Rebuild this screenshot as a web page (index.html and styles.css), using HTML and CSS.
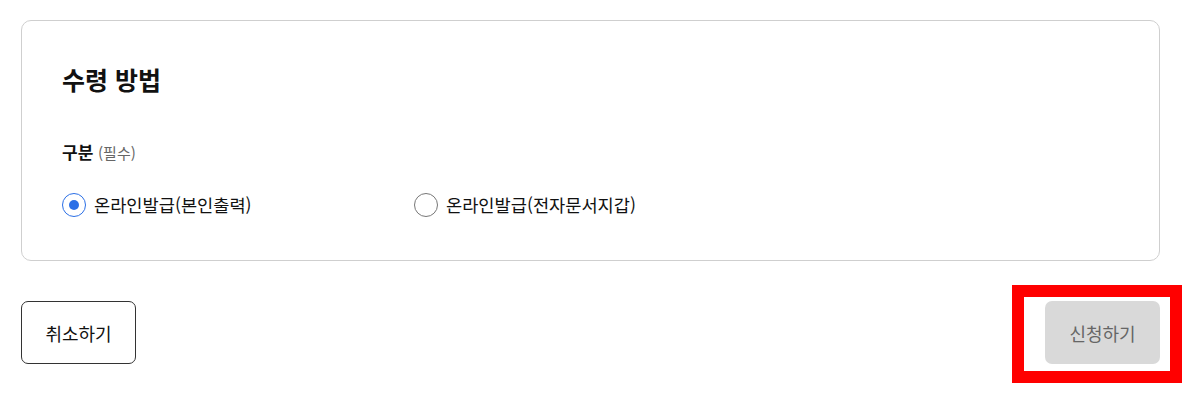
FILE: index.html
```html
<!DOCTYPE html>
<html lang="ko">
<head>
<meta charset="utf-8">
<link rel="stylesheet" href="styles.css">
</head>
<body>
<div class="page">
  <section class="card">
    <h2 class="title">수령 방법</h2>
    <div class="label">구분 <span class="req">(필수)</span></div>
    <div class="radios">
      <label class="radio checked"><span class="circle"></span><span class="rtext">온라인발급(본인출력)</span></label>
      <label class="radio"><span class="circle"></span><span class="rtext">온라인발급(전자문서지갑)</span></label>
    </div>
  </section>
  <div class="actions">
    <button class="btn cancel">취소하기</button>
    <div class="highlight"><button class="btn submit">신청하기</button></div>
  </div>
</div>
</body>
</html>
```
FILE: styles.css
```css
* { box-sizing: border-box; }
html, body { margin: 0; padding: 0; background: #fff; }
body { font-family: "Noto Sans CJK KR", "Noto Sans", sans-serif; color: #111; }
.page { width: 1186px; padding: 20px 26px 0 21px; }
.card {
  width: 1139px;
  height: 241px;
  border: 1px solid #cfcfcf;
  border-radius: 10px;
  padding: 39px 40px 0 40px;
}
.title { margin: 0; font-size: 25px; font-weight: 700; line-height: 38px; color: #111; }
.label { margin-top: 42px; font-size: 17px; font-weight: 700; line-height: 24px; }
.req { font-size: 15px; font-weight: 400; color: #666; }
.radios { display: flex; margin-top: 28px; }
.radio { display: flex; align-items: center; gap: 8px; font-size: 17.6px; line-height: 24px; }
.radio:first-child { width: 352px; }
.circle {
  width: 24px; height: 24px; border-radius: 50%;
  border: 1.5px solid #777; display: flex; align-items: center; justify-content: center;
  background: #fff;
}
.radio.checked .circle { border-color: #2b6fe6; }
.radio.checked .circle::after { content: ""; width: 10px; height: 10px; border-radius: 50%; background: #2b6fe6; }
.actions { display: flex; justify-content: space-between; align-items: flex-start; margin-top: 24px; }
.btn {
  font-family: inherit; font-size: 18px; height: 63px; border-radius: 7px; padding: 0;
}
.cancel { width: 115px; margin-top: 16px; background: #fff; border: 1px solid #333; color: #111; }
.highlight { border: 12px solid #ff0000; padding: 4px 10px 0 21px; margin-right: -22px; height: 98px; }
.submit { width: 115px; background: #d9d9d9; border: none; color: #666; }
```
